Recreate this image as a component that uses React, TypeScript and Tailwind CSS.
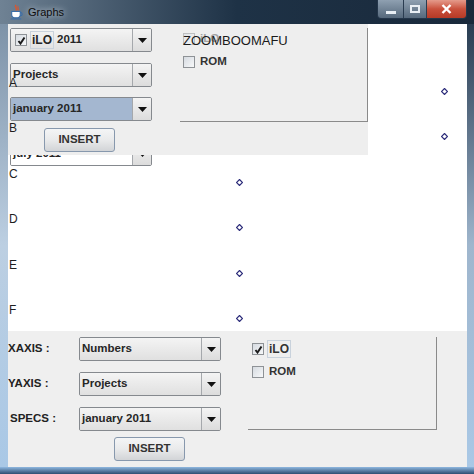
import React from "react";

const font = "font-['Liberation_Sans',Arial,sans-serif]";

function Arrow() {
  return (
    <svg width="9" height="5" viewBox="0 0 9 5">
      <polygon points="0,0 9,0 4.5,5" fill="#111" />
    </svg>
  );
}

function CheckBox({ checked, faint }: { checked?: boolean; faint?: boolean }) {
  return (
    <div
      className={
        "w-[12px] h-[12px] shrink-0 border border-[#8e9296] bg-gradient-to-br from-[#d6dbe1] to-[#f7f8f9] flex items-center justify-center " +
        (faint ? "opacity-50" : "")
      }
    >
      {checked && (
        <svg width="9" height="9" viewBox="0 0 9 9">
          <path d="M1.5 5 L3.5 7.5 L7.5 1.5" stroke="#1d1d1d" strokeWidth="2" fill="none" />
        </svg>
      )}
    </div>
  );
}

function Combo({
  children,
  selected,
  white,
}: {
  children: React.ReactNode;
  selected?: boolean;
  white?: boolean;
}) {
  const body = selected
    ? "bg-[#a4b7d0]"
    : white
    ? "bg-white"
    : "bg-gradient-to-b from-[#f4f4f4] to-[#e0e0e0]";
  return (
    <div className="flex h-[24px] w-[142px] shrink-0 border border-[#85898e] rounded-[2px] overflow-hidden">
      <div className={"flex-1 flex items-center pl-[2px] gap-[3px] text-[11.5px] font-bold text-[#262626] " + body}>
        {children}
      </div>
      <div className="w-[19px] flex items-center justify-center border-l border-[#a5a8ac] bg-gradient-to-b from-[#f4f4f4] to-[#dcdcdc]">
        <Arrow />
      </div>
    </div>
  );
}

function Button() {
  return (
    <div className="w-[71px] h-[24px] flex items-center justify-center rounded-[3px] border border-[#8798ad] bg-gradient-to-b from-[#f4f5f6] via-[#e9eaeb] to-[#d2d4d7] text-[11.5px] font-bold text-[#333]">
      INSERT
    </div>
  );
}

function Focus({ children }: { children: React.ReactNode }) {
  return <span className="px-[1px] border border-[#c9d2dc] leading-[16px] text-[12px]">{children}</span>;
}

function TitleBar() {
  return (
    <div className="h-[24px] flex items-start bg-gradient-to-r from-[#6f8294] via-[#1e3246] to-[#19293b]">
      <div className="flex items-center h-[24px] pl-[9px] gap-[4px]">
        <svg width="15" height="16" viewBox="0 0 13 15">
          <path d="M6 1 C4 3 8 4 6 6" stroke="#e0542a" strokeWidth="1.3" fill="none" />
          <path d="M8 2 C7 3.5 9 4.5 8 6" stroke="#e0542a" strokeWidth="1" fill="none" />
          <path d="M2 7 H10 V10 C10 12 8 13 6 13 C4 13 2 12 2 10 Z" fill="#fff" stroke="#3a6ea8" strokeWidth="1" />
          <path d="M10 8 C12.5 8 12.5 11 10 11" stroke="#3a6ea8" strokeWidth="1" fill="none" />
          <path d="M1 14 H11" stroke="#3a6ea8" strokeWidth="1" />
        </svg>
        <span className="text-[11px] text-[#0c0c0c] [text-shadow:0_0_6px_#dfe7ef]">Graphs</span>
      </div>
      <div className="flex-1" />
      <div className="flex h-[19px] mr-[7px] rounded-b-[4px] overflow-hidden border border-t-0 border-[#24364a]">
        <div className="w-[26px] flex items-center justify-center bg-gradient-to-b from-[#8fa0b1] to-[#56697c] border-r border-[#2a3c50]">
          <div className="w-[10px] h-[3px] bg-[#e8eef4] mt-[6px]" />
        </div>
        <div className="w-[23px] flex items-center justify-center bg-gradient-to-b from-[#8fa0b1] to-[#56697c] border-r border-[#2a3c50]">
          <div className="w-[10px] h-[8px] border-2 border-[#e8eef4]" />
        </div>
        <div className="w-[39px] flex items-center justify-center bg-gradient-to-b from-[#e49a8b] via-[#c9503c] to-[#b63a26]">
          <svg width="11" height="10" viewBox="0 0 11 10">
            <path d="M1.5 1 L9.5 9 M9.5 1 L1.5 9" stroke="#fff" strokeWidth="2.4" />
          </svg>
        </div>
      </div>
    </div>
  );
}

const letters = [
  { t: "A", y: 53 },
  { t: "B", y: 98 },
  { t: "C", y: 144 },
  { t: "D", y: 189 },
  { t: "E", y: 235 },
  { t: "F", y: 280 },
];

const points = [
  { x: 436, y: 67 },
  { x: 436, y: 112 },
  { x: 231, y: 158 },
  { x: 231, y: 203 },
  { x: 231, y: 249 },
  { x: 231, y: 294 },
];

export default function App() {
  return (
    <div className={"w-[474px] h-[474px] overflow-hidden flex flex-col bg-[#1d2f42] " + font}>
      <TitleBar />
      <div className="flex h-[443px]">
        <div className="w-[8px] bg-gradient-to-b from-[#7e93a8] via-[#bccfe2] to-[#a9c8e6]" />
        <div className="relative w-[459px] h-[443px] bg-white flex flex-col">
          {/* top panel */}
          <div className="flex h-[131px]">
            <div className="w-[360px] bg-[#eeeeee] flex">
              <div className="flex flex-col pl-[2px] pt-[4px] w-[150px]">
                <Combo>
                  <span className="pl-[2px]">
                    <CheckBox checked />
                  </span>
                  <Focus>iLO</Focus>
                  <span>2011</span>
                </Combo>
                <div className="mt-[11px]">
                  <Combo>Projects</Combo>
                </div>
                <div className="mt-[10px]">
                  <Combo selected>january 2011</Combo>
                </div>
                <div className="mt-[7px] ml-[34px]">
                  <Button />
                </div>
              </div>
              <div className="relative ml-[22px] mt-[4px] w-[188px] h-[94px] border-r border-b border-[#8a8a8a]">
                <div className="flex flex-col gap-[11px] pl-[3px] pt-[5px]">
                  <div className="flex items-center h-[12px] gap-[5px] text-[11.5px] font-bold text-[#333]">
                    <CheckBox faint />
                    <span className="opacity-40">iLO</span>
                  </div>
                  <div className="flex items-center h-[12px] gap-[5px] text-[11.5px] font-bold text-[#333]">
                    <CheckBox />
                    <span>ROM</span>
                  </div>
                </div>
                <span className="absolute left-[3px] top-[5px] text-[13px] leading-[15px] text-[#1a1a1a]">
                  ZOOMBOOMAFU
                </span>
              </div>
            </div>
            <div className="flex-1" />
          </div>

          {/* chart area */}
          <div className="h-[176px]">
            <div className="ml-[2px] w-[142px] h-[11px] overflow-hidden">
              <div className="-mt-[13px]">
                <Combo white>july 2011</Combo>
              </div>
            </div>
          </div>

          {/* bottom panel */}
          <div className="h-[136px] bg-[#efefef] flex">
            <div className="flex flex-col pt-[6px] w-[220px]">
              <div className="flex items-center">
                <div className="w-[71px] text-[11.5px] font-bold text-[#222]">XAXIS :</div>
                <Combo>Numbers</Combo>
              </div>
              <div className="flex items-center mt-[11px]">
                <div className="w-[71px] text-[11.5px] font-bold text-[#222]">YAXIS :</div>
                <Combo>Projects</Combo>
              </div>
              <div className="flex items-center mt-[11px]">
                <div className="w-[71px] pl-[2px] text-[11.5px] font-bold text-[#222]">SPECS :</div>
                <Combo>january 2011</Combo>
              </div>
              <div className="mt-[6px] ml-[106px]">
                <Button />
              </div>
            </div>
            <div className="ml-[20px] mt-[6px] w-[189px] h-[93px] border-r border-b border-[#8a8a8a]">
              <div className="flex flex-col gap-[11px] pl-[4px] pt-[6px]">
                <div className="flex items-center h-[12px] gap-[3px] text-[11.5px] font-bold text-[#333]">
                  <CheckBox checked />
                  <Focus>iLO</Focus>
                </div>
                <div className="flex items-center h-[12px] gap-[5px] text-[11.5px] font-bold text-[#333]">
                  <CheckBox />
                  <span>ROM</span>
                </div>
              </div>
            </div>
          </div>

          {/* chart overlay */}
          <div className="absolute left-0 top-0 w-[459px] h-[307px] pointer-events-none">
            {letters.map((l) => (
              <span
                key={l.t}
                className="absolute left-[1px] text-[12px] leading-[12px] text-[#1e1e1e]"
                style={{ top: l.y }}
              >
                {l.t}
              </span>
            ))}
            {points.map((p, i) => (
              <svg
                key={i}
                width="7"
                height="7"
                viewBox="0 0 7 7"
                className="absolute"
                style={{ left: p.x - 3.5, top: p.y - 3.5 }}
              >
                <polygon points="3.5,0.5 6.5,3.5 3.5,6.5 0.5,3.5" fill="#fff" stroke="#2c2c7a" strokeWidth="1.2" />
              </svg>
            ))}
          </div>
        </div>
        <div className="w-[7px] bg-gradient-to-b from-[#2a3d52] via-[#9fb6cd] to-[#a9c8e6]" />
      </div>
      <div className="h-[7px] bg-gradient-to-b from-[#8fb8e0] to-[#2f4e72]" />
    </div>
  );
}
